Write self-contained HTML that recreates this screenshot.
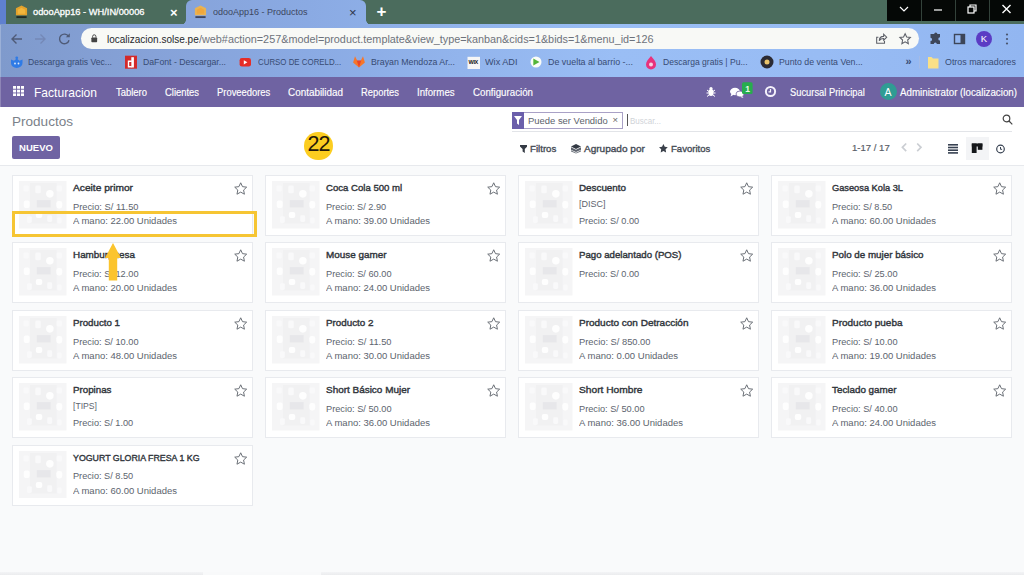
<!DOCTYPE html>
<html lang="es">
<head>
<meta charset="utf-8">
<title>odooApp16 - Productos</title>
<style>
*{box-sizing:border-box;margin:0;padding:0}
html,body{width:1024px;height:575px;overflow:hidden;background:#f9fafb;font-family:"Liberation Sans",sans-serif;}
body{position:relative}
.abs{position:absolute;white-space:nowrap;transform-origin:0 0}
/* chrome */
#tabstrip{position:absolute;left:0;top:0;width:1024px;height:25px;background:#4b6c5d}
#leftedge{position:absolute;left:0;top:0;width:6px;height:25px;background:#5f80d0}
#tab2{position:absolute;left:185.500px;top:0;width:180px;height:25px;background:linear-gradient(90deg,#7f9acc 0,#86a2d8 15%,#8aaae3 30%,#9abef5 60%,#98bcf4 80%,#92b6f1 100%);background-size:1024px 100%;background-position:-185.500px 0;border-radius:6px 6px 0 0}
#tab2:before,#tab2:after{content:"";position:absolute;bottom:0.500px;width:5px;height:5px}
#tab2:before{left:-5px;background:radial-gradient(circle at 0 0,transparent 4.500px,#87a4dc 5px)}
#tab2:after{right:-5px;background:radial-gradient(circle at 100% 0,transparent 4.500px,#8cade6 5px)}
#toolbar{position:absolute;left:0;top:24.300px;width:1024px;height:52.700px;background:linear-gradient(90deg,#7f9acc 0,#86a2d8 15%,#8aaae3 30%,#9abef5 60%,#98bcf4 80%,#92b6f1 100%)}
#url{position:absolute;left:80.700px;top:28px;width:838.500px;height:21px;border-radius:11px;background:#f8f9f6}
.tabt{font-size:9.300px;top:6.500px}
#winctl{position:absolute;left:887px;top:0;width:137px;height:21.200px;background:#050806}
#winctl i{position:absolute;top:0;width:1px;height:21.200px;background:#33423a}
.bm{font-size:9.400px;top:56.300px;color:#384b73}
/* odoo navbar */
#nav{position:absolute;left:0;top:77px;width:1024px;height:30px;background:#6f63a2}
.nv{font-size:10.200px;color:#fff;top:87.200px;-webkit-text-stroke:0.150px #fff}
/* control panel */
#cp{position:absolute;left:0;top:107px;width:1024px;height:58.500px;background:#fff;border-bottom:1px solid #e7e9ed}
#btn{position:absolute;left:12px;top:136px;width:48px;height:23px;background:#6f63a3;border-radius:2px;color:#fff;font-weight:bold;font-size:9.5px;text-align:center;line-height:23px;letter-spacing:0}
.cpt{font-size:9.700px;color:#454b55;top:142.900px;-webkit-text-stroke:0.350px #454b55}
/* cards */
.card{position:absolute;width:241px;height:61px;background:#fff;border:1px solid #e8eaee}
.card .ph{position:absolute;left:6px;top:5.300px;width:47.500px;height:47.500px}
.card .ti{transform-origin:0 0;position:absolute;left:60px;top:6px;font-size:9.900px;color:#30353b;-webkit-text-stroke:0.400px #30353b;white-space:nowrap}
.card .ln{transform-origin:0 0;position:absolute;left:60px;font-size:9.600px;color:#5d646e;white-space:nowrap;}
.card .l0{top:24.900px}
.card .l1{top:39.200px}
.card .star{position:absolute;left:220.300px;top:5px;width:15.400px;height:15.400px}
</style>
</head>
<body>
<!-- ===== browser chrome ===== -->
<div id="tabstrip"></div>
<div id="leftedge"></div>
<div id="tab2"></div>
<div id="toolbar"></div>
<div id="url"></div>
<div id="winctl"><i style="left:34px"></i><i style="left:68px"></i><i style="left:102px"></i></div>

<!-- tab 1 -->
<svg class="abs" style="left:14.500px;top:5px" width="13" height="14" viewBox="0 0 14 15"><path d="M7 0.500L13 3.500V11H1V3.500z" fill="#e3a22c"/><path d="M7 3L11 5V9.500H3V5z" fill="#f1b63c"/><rect x="1.500" y="12" width="11" height="2" fill="#1f2a25"/></svg>
<div class="abs tabt" style="left:33px;color:#fff;-webkit-text-stroke:0.300px #fff;transform:scaleX(0.9987)">odooApp16 - WH/IN/00006</div>
<div class="abs" style="left:170px;top:4.500px;color:#fff;font-size:13px;font-weight:bold">×</div>
<!-- tab 2 -->
<svg class="abs" style="left:193.500px;top:5px" width="13" height="14" viewBox="0 0 14 15"><path d="M7 0.500L13 3.500V11H1V3.500z" fill="#e9b354"/><path d="M7 3L11 5V9.500H3V5z" fill="#f0a73c"/><rect x="1.500" y="12" width="11" height="2" fill="#3c4560"/></svg>
<div class="abs tabt" style="left:213px;color:#3c4660;transform:scaleX(0.9674)">odooApp16 - Productos</div>
<div class="abs" style="left:349px;top:4.500px;color:#2d3446;font-size:13px">×</div>
<div class="abs" style="left:376.500px;top:1.500px;color:#fff;font-size:17px;font-weight:bold">+</div>
<!-- window controls -->
<svg class="abs" style="left:886.500px;top:-2.600px" width="137" height="24" viewBox="0 0 137 24" fill="none" stroke="#fff" stroke-width="1.2"><path d="M13 10l4 4 4-4"/><path d="M47 13h8"/><rect x="81" y="10" width="6" height="6"/><path d="M83 10v-2h6v6h-2"/><path d="M115.500 8l8 8M123.500 8l-8 8" stroke-width="1.400"/></svg>

<!-- toolbar icons -->
<svg class="abs" style="left:8px;top:29px" width="70" height="20" viewBox="0 0 70 20" fill="none" stroke-width="1.400"><path d="M14 10H4M8.500 5.500L4 10l4.500 4.500" stroke="#4f5b77"/><path d="M27 10h10M32.500 5.500L37 10l-4.500 4.500" stroke="#7488b6"/><path d="M60.500 7.500A4.800 4.800 0 1 0 61 11.200" stroke="#4f5b77"/><path d="M61.800 4.200v4h-4z" fill="#4f5b77" stroke="none"/></svg>
<svg class="abs" style="left:91px;top:34px" width="6.500" height="8.700" viewBox="0 0 9 12"><rect x="0.5" y="5" width="8" height="6.5" rx="1" fill="#444"/><path d="M2.2 5V3.4a2.3 2.3 0 0 1 4.6 0V5" fill="none" stroke="#444" stroke-width="1.3"/></svg>
<div class="abs" style="left:107px;top:32.500px;font-size:10.500px;color:#25272c;transform:scaleX(0.9521)">localizacion.solse.pe</div>
<div class="abs" style="left:199px;top:32.500px;font-size:10.500px;color:#6d727b;transform:scaleX(1.0312)">/web#action=257&amp;model=product.template&amp;view_type=kanban&amp;cids=1&amp;bids=1&amp;menu_id=126</div>
<svg class="abs" style="left:874.400px;top:32.200px" width="38.500" height="13.100" viewBox="0 0 44 15" fill="none" stroke="#5d6068" stroke-width="1.200"><path d="M5 6H3v7h9V10"/><path d="M6 10c0-3 2-5 5-5V2.5L14.5 6 11 9.500V7.500C9 7.500 7 8 6 10z"/><path transform="translate(3.600,0)" d="M32 2l1.800 3.800 4.200.5-3.100 2.900.8 4.200L32 11.300l-3.700 2.100.8-4.200L26 6.300l4.200-.5z"/></svg>
<svg class="abs" style="left:927px;top:30px" width="90" height="18" viewBox="0 0 90 18"><path d="M5 4h2.200a1.600 1.600 0 1 1 3.200 0H13v3.200a1.700 1.700 0 1 0 0 3.400V14H9.800a1.500 1.500 0 1 0-3 0H3.500v-3a1.600 1.600 0 1 0 0-3.200V4z" fill="#3d4659"/><rect x="27.500" y="4.500" width="10" height="9" fill="none" stroke="#3d4659" stroke-width="1.400"/><rect x="33.500" y="4.500" width="4" height="9" fill="#3d4659"/><circle cx="57" cy="9" r="8" fill="#5b3cc4"/><circle cx="80" cy="4.500" r="1.100" fill="#4a556e"/><circle cx="80" cy="9" r="1.100" fill="#4a556e"/><circle cx="80" cy="13.500" r="1.100" fill="#4a556e"/></svg>
<div class="abs" style="left:980.700px;top:33px;font-size:9.500px;color:#fff">K</div>

<!-- bookmarks -->
<svg class="abs" style="left:8px;top:53px" width="1016" height="18" viewBox="0 0 1016 18">
<path d="M3 6.500l3 1.300 2.750-2.200 2.750 2.200 3-1.300V10a5.750 5 0 0 1-11.500 0z" fill="#2f7be6"/><circle cx="8.750" cy="4.800" r="1.400" fill="#2f7be6"/><circle cx="7" cy="10.500" r="0.900" fill="#dce9fb"/><circle cx="10.500" cy="10.500" r="0.900" fill="#dce9fb"/>
<rect x="117" y="2.700" width="12" height="13" fill="#d42a2a"/><rect x="123.300" y="4.200" width="2.600" height="10.300" fill="#fff"/><rect x="119.800" y="7.500" width="4" height="7" fill="#fff"/><rect x="121.200" y="9" width="2.100" height="4" fill="#d42a2a"/>
<rect x="231.600" y="5" width="11.400" height="8.600" rx="2.300" fill="#e52d27"/><path d="M235.800 7.200l3.600 2.100-3.600 2.100z" fill="#fff"/>
<path d="M347 3.200l2.300 4.600h3.400l2.300-4.600 1.900 6.300-5.900 5-5.900-5z" fill="#f6762a"/><path d="M348.800 7.600h4.400l-2.200 6.800z" fill="#e9432a"/>
<rect x="459.500" y="3.800" width="12.500" height="12.200" fill="#f6f6f6"/>
<circle cx="528" cy="9" r="5.500" fill="#fbfdf8"/><path d="M525.300 5.600l6.200 3.400-6.200 3.400z" fill="#54b53a"/>
<path d="M643 3c3 3.500 5 5.500 5 8.500a5 5 0 0 1-10 0c0-3 2-5 5-8.500z" fill="#e8327c"/><circle cx="643" cy="11.500" r="2" fill="#f7d3e3"/>
<circle cx="759" cy="9" r="6.500" fill="#2b2b33"/><circle cx="759" cy="9" r="2.500" fill="#e9c36a"/>
<path d="M920 4h3.500l1.500 1.500H930.500V15.500H920z" fill="#f9e088"/>
<rect x="911" y="3" width="1" height="12.500" fill="#a4bbe6"/>
</svg>
<div class="abs" style="left:468.500px;top:59px;font-size:5.500px;font-weight:bold;color:#111;letter-spacing:-0.300px">WIX</div>
<div class="abs bm" style="left:28px;transform:scaleX(0.9158)">Descarga gratis Vec...</div>
<div class="abs bm" style="left:143px;transform:scaleX(0.9261)">DaFont - Descargar...</div>
<div class="abs bm" style="left:257.500px;transform:scaleX(0.841)">CURSO DE CORELD...</div>
<div class="abs bm" style="left:371px;transform:scaleX(0.9371)">Brayan Mendoza Ar...</div>
<div class="abs bm" style="left:485px;transform:scaleX(0.9747)">Wix ADI</div>
<div class="abs bm" style="left:548px;transform:scaleX(0.9484)">De vuelta al barrio -...</div>
<div class="abs bm" style="left:663px;transform:scaleX(0.9138)">Descarga gratis | Pu...</div>
<div class="abs bm" style="left:779px;transform:scaleX(0.9347)">Punto de venta Ven...</div>
<div class="abs bm" style="left:905.500px;top:54.800px;font-size:11px;font-weight:bold">»</div>
<div class="abs bm" style="left:945px;transform:scaleX(0.9463)">Otros marcadores</div>

<!-- ===== odoo navbar ===== -->
<div class="abs" style="left:0;top:24.500px;width:1.300px;height:82.500px;background:rgba(255,255,255,0.22);z-index:5"></div>
<div id="nav"></div>
<svg class="abs" style="left:13px;top:86.200px" width="11.200" height="10.200" viewBox="0 0 12 11" fill="#fff"><rect x="0" y="0" width="3.300" height="3"/><rect x="4.300" y="0" width="3.300" height="3"/><rect x="8.600" y="0" width="3.300" height="3"/><rect x="0" y="4" width="3.300" height="3"/><rect x="4.300" y="4" width="3.300" height="3"/><rect x="8.600" y="4" width="3.300" height="3"/><rect x="0" y="8" width="3.300" height="3"/><rect x="4.300" y="8" width="3.300" height="3"/><rect x="8.600" y="8" width="3.300" height="3"/></svg>
<div class="abs" style="left:34px;top:84.700px;font-size:13px;color:#fff;transform:scaleX(0.9275)">Facturacion</div>
<div class="abs nv" style="left:116px;transform:scaleX(0.9275)">Tablero</div>
<div class="abs nv" style="left:165px;transform:scaleX(0.9236)">Clientes</div>
<div class="abs nv" style="left:217px;transform:scaleX(0.9227)">Proveedores</div>
<div class="abs nv" style="left:288px;transform:scaleX(0.971)">Contabilidad</div>
<div class="abs nv" style="left:361px;transform:scaleX(0.9191)">Reportes</div>
<div class="abs nv" style="left:417px;transform:scaleX(0.9485)">Informes</div>
<div class="abs nv" style="left:473px;transform:scaleX(0.9543)">Configuración</div>
<svg class="abs" style="left:704px;top:83.400px;overflow:visible" width="76" height="17" viewBox="0 0 76 17"><ellipse cx="7" cy="9.500" rx="2.600" ry="3.500" fill="#fff"/><circle cx="7" cy="5.500" r="1.600" fill="#fff"/><path d="M3 7l2 1.500M11 7L9 8.500M2.500 10h2M11.500 10h-2M3 13.500l2-1.500M11 13.500L9 12" stroke="#fff" stroke-width="1" fill="none"/><ellipse cx="31" cy="8.500" rx="5" ry="3.700" fill="#fff"/><path d="M27.500 10.500l-1 3 3.500-2z" fill="#fff"/><ellipse cx="36" cy="11" rx="4" ry="3" fill="#fff" stroke="#71639e" stroke-width=".8"/><path d="M38 13l1.500 2-3-1z" fill="#fff"/><rect x="38" y="-0.800" width="10.600" height="11.800" rx="1.500" fill="#27ad4e"/><circle cx="66.500" cy="8.500" r="4.600" fill="none" stroke="#f4f1fb" stroke-width="2"/><path d="M66.500 6v2.800h-2" fill="none" stroke="#f4f1fb" stroke-width="1.200"/></svg>
<div class="abs" style="left:745.300px;top:83.900px;font-size:8.500px;font-weight:bold;color:#eafbe9">1</div>
<div class="abs nv" style="left:790px;transform:scaleX(0.9173)">Sucursal Principal</div>
<div class="abs" style="left:879.500px;top:83px;width:17px;height:17px;border-radius:9px;background:#2f9c93"></div>
<div class="abs" style="left:884.500px;top:85.600px;font-size:10.500px;color:#fff">A</div>
<div class="abs nv" style="left:900px;transform:scaleX(0.9567)">Administrator (localizacion)</div>

<!-- ===== control panel ===== -->
<div id="cp"></div>
<div class="abs" style="left:12px;top:113.700px;font-size:13.500px;color:#7b8189;transform:scaleX(1.0033)">Productos</div>
<div id="btn">NUEVO</div>
<div class="abs" style="left:304px;top:131.500px;width:28.500px;height:28.500px;border-radius:15px;background:#fccd20"></div>
<div class="abs" style="left:307.500px;top:132.400px;font-size:21.500px;color:#24170a;letter-spacing:-1px">22</div>
<!-- search -->
<div class="abs" style="left:512px;top:130.500px;width:500px;height:1px;background:#e2e4e8"></div>
<div class="abs" style="left:512px;top:112px;width:111px;height:16.500px;border:1px solid #a9a1c6;background:#fff"></div>
<div class="abs" style="left:512px;top:112px;width:12px;height:16.500px;background:#6b5fab"></div>
<svg class="abs" style="left:514px;top:116px" width="8" height="9" viewBox="0 0 8 9"><path d="M0 0h8L5 4v5L3 7.500V4z" fill="#fff"/></svg>
<div class="abs" style="left:528.300px;top:114.800px;font-size:9.700px;color:#5c626b;transform:scaleX(0.9735)">Puede ser Vendido</div>
<div class="abs" style="left:612.500px;top:114px;font-size:9.500px;color:#666">×</div>
<div class="abs" style="left:627px;top:114px;width:1px;height:12px;background:#555"></div>
<div class="abs" style="left:630px;top:115px;font-size:9.500px;color:#d0d3d8;transform:scaleX(0.8385)">Buscar...</div>
<svg class="abs" style="left:1002px;top:114px" width="11" height="11" viewBox="0 0 11 11" fill="none" stroke="#444" stroke-width="1.200"><circle cx="4.500" cy="4.500" r="3.300"/><path d="M7 7l3.300 3.300"/></svg>
<!-- filters -->
<svg class="abs" style="left:519.800px;top:144.800px" width="7.400" height="8" viewBox="0 0 7.400 8"><path d="M0 0h7.400v1.400L4.800 4V8L2.600 6.600V4L0 1.400z" fill="#353b45"/></svg>
<div class="abs cpt" style="left:530px;transform:scaleX(0.9972)">Filtros</div>
<svg class="abs" style="left:570.800px;top:144px" width="10" height="9.600" viewBox="0 0 11 10.500"><path d="M5.500 0L11 2.700 5.500 5.400 0 2.700z" fill="#343a44"/><path d="M0 3.600l5.500 2.700L11 3.600v2.600L5.500 8.900 0 6.200z" fill="#5d636d"/><path d="M0 6.800l5.500 2.700L11 6.800v1.400L5.500 10.500 0 8.200z" fill="#6f757e"/></svg>
<div class="abs cpt" style="left:583.700px;transform:scaleX(1.0357)">Agrupado por</div>
<svg class="abs" style="left:659px;top:144.200px" width="8.800" height="8.400" viewBox="0 0 24 23"><path d="M12 0l3.700 7.600 8.300 1.200-6 5.900 1.400 8.300L12 19l-7.400 4 1.400-8.300-6-5.900 8.300-1.200z" fill="#3a404a"/></svg>
<div class="abs cpt" style="left:671.200px;transform:scaleX(0.9867)">Favoritos</div>
<div class="abs" style="left:852px;top:142.300px;font-size:9.700px;color:#5a6068;-webkit-text-stroke:0.200px #5a6068;transform:scaleX(0.9856)">1-17 / 17</div>
<svg class="abs" style="left:898.700px;top:141.800px" width="28" height="11" viewBox="0 0 28 11" fill="none" stroke="#cbced3" stroke-width="1.700"><path d="M7.200 1.500L3.400 5.300l3.800 3.800"/><path d="M18.200 1.500l3.800 3.800-3.800 3.800"/></svg>
<div class="abs" style="left:966.400px;top:136.500px;width:23px;height:23.500px;background:#f3f4f6"></div>
<svg class="abs" style="left:947px;top:143px" width="60" height="12" viewBox="0 0 60 12"><g fill="#374151"><rect x="1" y="1" width="10" height="1.600"/><rect x="1" y="3.700" width="10" height="1.600"/><rect x="1" y="6.400" width="10" height="1.600"/><rect x="1" y="9.100" width="10" height="1.600"/><rect x="24.800" y="0.500" width="10.600" height="3" fill="#15171a"/><rect x="24.800" y="0.500" width="4.800" height="9.500" fill="#15171a"/><rect x="30.800" y="0.500" width="4.600" height="6.300" fill="#15171a"/></g><circle cx="53.500" cy="6" r="3.800" fill="none" stroke="#374151" stroke-width="1.200"/><path d="M53.500 4v2.300h1.600" fill="none" stroke="#374151" stroke-width="1"/></svg>

<!-- ===== kanban ===== -->
<div class="card" style="left:12px;top:175px"><svg class="ph" viewBox="0 0 48 48"><rect width="48" height="48" fill="#f5f5f6"/><rect x="11" y="2" width="27" height="41" fill="#f1f1f2"/><rect x="18" y="19.300" width="14" height="7.400" fill="#e7e7ea"/><g fill="#f9f9fa"><rect x="4.500" y="4.500" width="5.500" height="6" rx="1.500"/><rect x="16.500" y="4.500" width="5.500" height="8" rx="1.500"/><rect x="38" y="4.500" width="5.500" height="6" rx="1.500"/><rect x="8" y="35.500" width="5" height="7" rx="1.500"/><rect x="28.500" y="34.500" width="5" height="7" rx="1.500"/><rect x="38.500" y="37" width="4.500" height="6" rx="1.500"/></g><g fill="#fefefe"><circle cx="31.200" cy="13" r="3.800"/><rect x="4.800" y="19.600" width="6" height="7.600" rx="2"/><rect x="37.700" y="20.200" width="6" height="7.600" rx="2.500"/><rect x="17" y="31.400" width="6.500" height="6" rx="2"/></g></svg><div class="ti" style="transform:scaleX(1.0314)">Aceite primor</div><div class="ln l0" style="transform:scaleX(0.9695)">Precio: S/ 11.50</div><div class="ln l1" style="transform:scaleX(0.9897)">A mano: 22.00 Unidades</div><svg class="star" viewBox="0 0 24 24"><path d="M12 2.8l2.8 6 6.5.8-4.8 4.5 1.3 6.5L12 17.3 6.2 20.6l1.3-6.5L2.7 9.6l6.5-.8z" fill="none" stroke="#666b73" stroke-width="1.5" stroke-linejoin="round"/></svg></div>
<div class="card" style="left:265px;top:175px"><svg class="ph" viewBox="0 0 48 48"><rect width="48" height="48" fill="#f5f5f6"/><rect x="11" y="2" width="27" height="41" fill="#f1f1f2"/><rect x="18" y="19.300" width="14" height="7.400" fill="#e7e7ea"/><g fill="#f9f9fa"><rect x="4.500" y="4.500" width="5.500" height="6" rx="1.500"/><rect x="16.500" y="4.500" width="5.500" height="8" rx="1.500"/><rect x="38" y="4.500" width="5.500" height="6" rx="1.500"/><rect x="8" y="35.500" width="5" height="7" rx="1.500"/><rect x="28.500" y="34.500" width="5" height="7" rx="1.500"/><rect x="38.500" y="37" width="4.500" height="6" rx="1.500"/></g><g fill="#fefefe"><circle cx="31.200" cy="13" r="3.800"/><rect x="4.800" y="19.600" width="6" height="7.600" rx="2"/><rect x="37.700" y="20.200" width="6" height="7.600" rx="2.500"/><rect x="17" y="31.400" width="6.500" height="6" rx="2"/></g></svg><div class="ti" style="transform:scaleX(0.9707)">Coca Cola 500 ml</div><div class="ln l0" style="transform:scaleX(0.9565)">Precio: S/ 2.90</div><div class="ln l1" style="transform:scaleX(0.9897)">A mano: 39.00 Unidades</div><svg class="star" viewBox="0 0 24 24"><path d="M12 2.8l2.8 6 6.5.8-4.8 4.5 1.3 6.5L12 17.3 6.2 20.6l1.3-6.5L2.7 9.6l6.5-.8z" fill="none" stroke="#666b73" stroke-width="1.5" stroke-linejoin="round"/></svg></div>
<div class="card" style="left:518px;top:175px"><svg class="ph" viewBox="0 0 48 48"><rect width="48" height="48" fill="#f5f5f6"/><rect x="11" y="2" width="27" height="41" fill="#f1f1f2"/><rect x="18" y="19.300" width="14" height="7.400" fill="#e7e7ea"/><g fill="#f9f9fa"><rect x="4.500" y="4.500" width="5.500" height="6" rx="1.500"/><rect x="16.500" y="4.500" width="5.500" height="8" rx="1.500"/><rect x="38" y="4.500" width="5.500" height="6" rx="1.500"/><rect x="8" y="35.500" width="5" height="7" rx="1.500"/><rect x="28.500" y="34.500" width="5" height="7" rx="1.500"/><rect x="38.500" y="37" width="4.500" height="6" rx="1.500"/></g><g fill="#fefefe"><circle cx="31.200" cy="13" r="3.800"/><rect x="4.800" y="19.600" width="6" height="7.600" rx="2"/><rect x="37.700" y="20.200" width="6" height="7.600" rx="2.500"/><rect x="17" y="31.400" width="6.500" height="6" rx="2"/></g></svg><div class="ti" style="transform:scaleX(0.9954)">Descuento</div><div class="ln l0" style="top:21.900px;transform:scaleX(0.9375)">[DISC]</div><div class="ln l1" style="transform:scaleX(0.9565)">Precio: S/ 0.00</div><svg class="star" viewBox="0 0 24 24"><path d="M12 2.8l2.8 6 6.5.8-4.8 4.5 1.3 6.5L12 17.3 6.2 20.6l1.3-6.5L2.7 9.6l6.5-.8z" fill="none" stroke="#666b73" stroke-width="1.5" stroke-linejoin="round"/></svg></div>
<div class="card" style="left:771px;top:175px"><svg class="ph" viewBox="0 0 48 48"><rect width="48" height="48" fill="#f5f5f6"/><rect x="11" y="2" width="27" height="41" fill="#f1f1f2"/><rect x="18" y="19.300" width="14" height="7.400" fill="#e7e7ea"/><g fill="#f9f9fa"><rect x="4.500" y="4.500" width="5.500" height="6" rx="1.500"/><rect x="16.500" y="4.500" width="5.500" height="8" rx="1.500"/><rect x="38" y="4.500" width="5.500" height="6" rx="1.500"/><rect x="8" y="35.500" width="5" height="7" rx="1.500"/><rect x="28.500" y="34.500" width="5" height="7" rx="1.500"/><rect x="38.500" y="37" width="4.500" height="6" rx="1.500"/></g><g fill="#fefefe"><circle cx="31.200" cy="13" r="3.800"/><rect x="4.800" y="19.600" width="6" height="7.600" rx="2"/><rect x="37.700" y="20.200" width="6" height="7.600" rx="2.500"/><rect x="17" y="31.400" width="6.500" height="6" rx="2"/></g></svg><div class="ti" style="transform:scaleX(0.9371)">Gaseosa Kola 3L</div><div class="ln l0" style="transform:scaleX(0.9565)">Precio: S/ 8.50</div><div class="ln l1" style="transform:scaleX(0.9897)">A mano: 60.00 Unidades</div><svg class="star" viewBox="0 0 24 24"><path d="M12 2.8l2.8 6 6.5.8-4.8 4.5 1.3 6.5L12 17.3 6.2 20.6l1.3-6.5L2.7 9.6l6.5-.8z" fill="none" stroke="#666b73" stroke-width="1.5" stroke-linejoin="round"/></svg></div>
<div class="card" style="left:12px;top:242px"><svg class="ph" viewBox="0 0 48 48"><rect width="48" height="48" fill="#f5f5f6"/><rect x="11" y="2" width="27" height="41" fill="#f1f1f2"/><rect x="18" y="19.300" width="14" height="7.400" fill="#e7e7ea"/><g fill="#f9f9fa"><rect x="4.500" y="4.500" width="5.500" height="6" rx="1.500"/><rect x="16.500" y="4.500" width="5.500" height="8" rx="1.500"/><rect x="38" y="4.500" width="5.500" height="6" rx="1.500"/><rect x="8" y="35.500" width="5" height="7" rx="1.500"/><rect x="28.500" y="34.500" width="5" height="7" rx="1.500"/><rect x="38.500" y="37" width="4.500" height="6" rx="1.500"/></g><g fill="#fefefe"><circle cx="31.200" cy="13" r="3.800"/><rect x="4.800" y="19.600" width="6" height="7.600" rx="2"/><rect x="37.700" y="20.200" width="6" height="7.600" rx="2.500"/><rect x="17" y="31.400" width="6.500" height="6" rx="2"/></g></svg><div class="ti" style="transform:scaleX(0.9995)">Hamburguesa</div><div class="ln l0" style="transform:scaleX(0.9595)">Precio: S/ 12.00</div><div class="ln l1" style="transform:scaleX(0.9897)">A mano: 20.00 Unidades</div><svg class="star" viewBox="0 0 24 24"><path d="M12 2.8l2.8 6 6.5.8-4.8 4.5 1.3 6.5L12 17.3 6.2 20.6l1.3-6.5L2.7 9.6l6.5-.8z" fill="none" stroke="#666b73" stroke-width="1.5" stroke-linejoin="round"/></svg></div>
<div class="card" style="left:265px;top:242px"><svg class="ph" viewBox="0 0 48 48"><rect width="48" height="48" fill="#f5f5f6"/><rect x="11" y="2" width="27" height="41" fill="#f1f1f2"/><rect x="18" y="19.300" width="14" height="7.400" fill="#e7e7ea"/><g fill="#f9f9fa"><rect x="4.500" y="4.500" width="5.500" height="6" rx="1.500"/><rect x="16.500" y="4.500" width="5.500" height="8" rx="1.500"/><rect x="38" y="4.500" width="5.500" height="6" rx="1.500"/><rect x="8" y="35.500" width="5" height="7" rx="1.500"/><rect x="28.500" y="34.500" width="5" height="7" rx="1.500"/><rect x="38.500" y="37" width="4.500" height="6" rx="1.500"/></g><g fill="#fefefe"><circle cx="31.200" cy="13" r="3.800"/><rect x="4.800" y="19.600" width="6" height="7.600" rx="2"/><rect x="37.700" y="20.200" width="6" height="7.600" rx="2.500"/><rect x="17" y="31.400" width="6.500" height="6" rx="2"/></g></svg><div class="ti" style="transform:scaleX(1.0021)">Mouse gamer</div><div class="ln l0" style="transform:scaleX(0.9595)">Precio: S/ 60.00</div><div class="ln l1" style="transform:scaleX(0.9897)">A mano: 24.00 Unidades</div><svg class="star" viewBox="0 0 24 24"><path d="M12 2.8l2.8 6 6.5.8-4.8 4.5 1.3 6.5L12 17.3 6.2 20.6l1.3-6.5L2.7 9.6l6.5-.8z" fill="none" stroke="#666b73" stroke-width="1.5" stroke-linejoin="round"/></svg></div>
<div class="card" style="left:518px;top:242px"><svg class="ph" viewBox="0 0 48 48"><rect width="48" height="48" fill="#f5f5f6"/><rect x="11" y="2" width="27" height="41" fill="#f1f1f2"/><rect x="18" y="19.300" width="14" height="7.400" fill="#e7e7ea"/><g fill="#f9f9fa"><rect x="4.500" y="4.500" width="5.500" height="6" rx="1.500"/><rect x="16.500" y="4.500" width="5.500" height="8" rx="1.500"/><rect x="38" y="4.500" width="5.500" height="6" rx="1.500"/><rect x="8" y="35.500" width="5" height="7" rx="1.500"/><rect x="28.500" y="34.500" width="5" height="7" rx="1.500"/><rect x="38.500" y="37" width="4.500" height="6" rx="1.500"/></g><g fill="#fefefe"><circle cx="31.200" cy="13" r="3.800"/><rect x="4.800" y="19.600" width="6" height="7.600" rx="2"/><rect x="37.700" y="20.200" width="6" height="7.600" rx="2.500"/><rect x="17" y="31.400" width="6.500" height="6" rx="2"/></g></svg><div class="ti" style="transform:scaleX(0.9775)">Pago adelantado (POS)</div><div class="ln l0" style="transform:scaleX(0.9565)">Precio: S/ 0.00</div><svg class="star" viewBox="0 0 24 24"><path d="M12 2.8l2.8 6 6.5.8-4.8 4.5 1.3 6.5L12 17.3 6.2 20.6l1.3-6.5L2.7 9.6l6.5-.8z" fill="none" stroke="#666b73" stroke-width="1.5" stroke-linejoin="round"/></svg></div>
<div class="card" style="left:771px;top:242px"><svg class="ph" viewBox="0 0 48 48"><rect width="48" height="48" fill="#f5f5f6"/><rect x="11" y="2" width="27" height="41" fill="#f1f1f2"/><rect x="18" y="19.300" width="14" height="7.400" fill="#e7e7ea"/><g fill="#f9f9fa"><rect x="4.500" y="4.500" width="5.500" height="6" rx="1.500"/><rect x="16.500" y="4.500" width="5.500" height="8" rx="1.500"/><rect x="38" y="4.500" width="5.500" height="6" rx="1.500"/><rect x="8" y="35.500" width="5" height="7" rx="1.500"/><rect x="28.500" y="34.500" width="5" height="7" rx="1.500"/><rect x="38.500" y="37" width="4.500" height="6" rx="1.500"/></g><g fill="#fefefe"><circle cx="31.200" cy="13" r="3.800"/><rect x="4.800" y="19.600" width="6" height="7.600" rx="2"/><rect x="37.700" y="20.200" width="6" height="7.600" rx="2.500"/><rect x="17" y="31.400" width="6.500" height="6" rx="2"/></g></svg><div class="ti" style="transform:scaleX(0.9922)">Polo de mujer básico</div><div class="ln l0" style="transform:scaleX(0.9595)">Precio: S/ 25.00</div><div class="ln l1" style="transform:scaleX(0.9897)">A mano: 36.00 Unidades</div><svg class="star" viewBox="0 0 24 24"><path d="M12 2.8l2.8 6 6.5.8-4.8 4.5 1.3 6.5L12 17.3 6.2 20.6l1.3-6.5L2.7 9.6l6.5-.8z" fill="none" stroke="#666b73" stroke-width="1.5" stroke-linejoin="round"/></svg></div>
<div class="card" style="left:12px;top:310px"><svg class="ph" viewBox="0 0 48 48"><rect width="48" height="48" fill="#f5f5f6"/><rect x="11" y="2" width="27" height="41" fill="#f1f1f2"/><rect x="18" y="19.300" width="14" height="7.400" fill="#e7e7ea"/><g fill="#f9f9fa"><rect x="4.500" y="4.500" width="5.500" height="6" rx="1.500"/><rect x="16.500" y="4.500" width="5.500" height="8" rx="1.500"/><rect x="38" y="4.500" width="5.500" height="6" rx="1.500"/><rect x="8" y="35.500" width="5" height="7" rx="1.500"/><rect x="28.500" y="34.500" width="5" height="7" rx="1.500"/><rect x="38.500" y="37" width="4.500" height="6" rx="1.500"/></g><g fill="#fefefe"><circle cx="31.200" cy="13" r="3.800"/><rect x="4.800" y="19.600" width="6" height="7.600" rx="2"/><rect x="37.700" y="20.200" width="6" height="7.600" rx="2.500"/><rect x="17" y="31.400" width="6.500" height="6" rx="2"/></g></svg><div class="ti" style="transform:scaleX(0.984)">Producto 1</div><div class="ln l0" style="transform:scaleX(0.9595)">Precio: S/ 10.00</div><div class="ln l1" style="transform:scaleX(0.9897)">A mano: 48.00 Unidades</div><svg class="star" viewBox="0 0 24 24"><path d="M12 2.8l2.8 6 6.5.8-4.8 4.5 1.3 6.5L12 17.3 6.2 20.6l1.3-6.5L2.7 9.6l6.5-.8z" fill="none" stroke="#666b73" stroke-width="1.5" stroke-linejoin="round"/></svg></div>
<div class="card" style="left:265px;top:310px"><svg class="ph" viewBox="0 0 48 48"><rect width="48" height="48" fill="#f5f5f6"/><rect x="11" y="2" width="27" height="41" fill="#f1f1f2"/><rect x="18" y="19.300" width="14" height="7.400" fill="#e7e7ea"/><g fill="#f9f9fa"><rect x="4.500" y="4.500" width="5.500" height="6" rx="1.500"/><rect x="16.500" y="4.500" width="5.500" height="8" rx="1.500"/><rect x="38" y="4.500" width="5.500" height="6" rx="1.500"/><rect x="8" y="35.500" width="5" height="7" rx="1.500"/><rect x="28.500" y="34.500" width="5" height="7" rx="1.500"/><rect x="38.500" y="37" width="4.500" height="6" rx="1.500"/></g><g fill="#fefefe"><circle cx="31.200" cy="13" r="3.800"/><rect x="4.800" y="19.600" width="6" height="7.600" rx="2"/><rect x="37.700" y="20.200" width="6" height="7.600" rx="2.500"/><rect x="17" y="31.400" width="6.500" height="6" rx="2"/></g></svg><div class="ti" style="transform:scaleX(0.9944)">Producto 2</div><div class="ln l0" style="transform:scaleX(0.9695)">Precio: S/ 11.50</div><div class="ln l1" style="transform:scaleX(0.9897)">A mano: 30.00 Unidades</div><svg class="star" viewBox="0 0 24 24"><path d="M12 2.8l2.8 6 6.5.8-4.8 4.5 1.3 6.5L12 17.3 6.2 20.6l1.3-6.5L2.7 9.6l6.5-.8z" fill="none" stroke="#666b73" stroke-width="1.5" stroke-linejoin="round"/></svg></div>
<div class="card" style="left:518px;top:310px"><svg class="ph" viewBox="0 0 48 48"><rect width="48" height="48" fill="#f5f5f6"/><rect x="11" y="2" width="27" height="41" fill="#f1f1f2"/><rect x="18" y="19.300" width="14" height="7.400" fill="#e7e7ea"/><g fill="#f9f9fa"><rect x="4.500" y="4.500" width="5.500" height="6" rx="1.500"/><rect x="16.500" y="4.500" width="5.500" height="8" rx="1.500"/><rect x="38" y="4.500" width="5.500" height="6" rx="1.500"/><rect x="8" y="35.500" width="5" height="7" rx="1.500"/><rect x="28.500" y="34.500" width="5" height="7" rx="1.500"/><rect x="38.500" y="37" width="4.500" height="6" rx="1.500"/></g><g fill="#fefefe"><circle cx="31.200" cy="13" r="3.800"/><rect x="4.800" y="19.600" width="6" height="7.600" rx="2"/><rect x="37.700" y="20.200" width="6" height="7.600" rx="2.500"/><rect x="17" y="31.400" width="6.500" height="6" rx="2"/></g></svg><div class="ti" style="transform:scaleX(1.0126)">Producto con Detracción</div><div class="ln l0" style="transform:scaleX(0.9713)">Precio: S/ 850.00</div><div class="ln l1" style="transform:scaleX(0.9925)">A mano: 0.00 Unidades</div><svg class="star" viewBox="0 0 24 24"><path d="M12 2.8l2.8 6 6.5.8-4.8 4.5 1.3 6.5L12 17.3 6.2 20.6l1.3-6.5L2.7 9.6l6.5-.8z" fill="none" stroke="#666b73" stroke-width="1.5" stroke-linejoin="round"/></svg></div>
<div class="card" style="left:771px;top:310px"><svg class="ph" viewBox="0 0 48 48"><rect width="48" height="48" fill="#f5f5f6"/><rect x="11" y="2" width="27" height="41" fill="#f1f1f2"/><rect x="18" y="19.300" width="14" height="7.400" fill="#e7e7ea"/><g fill="#f9f9fa"><rect x="4.500" y="4.500" width="5.500" height="6" rx="1.500"/><rect x="16.500" y="4.500" width="5.500" height="8" rx="1.500"/><rect x="38" y="4.500" width="5.500" height="6" rx="1.500"/><rect x="8" y="35.500" width="5" height="7" rx="1.500"/><rect x="28.500" y="34.500" width="5" height="7" rx="1.500"/><rect x="38.500" y="37" width="4.500" height="6" rx="1.500"/></g><g fill="#fefefe"><circle cx="31.200" cy="13" r="3.800"/><rect x="4.800" y="19.600" width="6" height="7.600" rx="2"/><rect x="37.700" y="20.200" width="6" height="7.600" rx="2.500"/><rect x="17" y="31.400" width="6.500" height="6" rx="2"/></g></svg><div class="ti" style="transform:scaleX(1.011)">Producto pueba</div><div class="ln l0" style="transform:scaleX(0.9595)">Precio: S/ 10.00</div><div class="ln l1" style="transform:scaleX(0.9897)">A mano: 19.00 Unidades</div><svg class="star" viewBox="0 0 24 24"><path d="M12 2.8l2.8 6 6.5.8-4.8 4.5 1.3 6.5L12 17.3 6.2 20.6l1.3-6.5L2.7 9.6l6.5-.8z" fill="none" stroke="#666b73" stroke-width="1.5" stroke-linejoin="round"/></svg></div>
<div class="card" style="left:12px;top:377px"><svg class="ph" viewBox="0 0 48 48"><rect width="48" height="48" fill="#f5f5f6"/><rect x="11" y="2" width="27" height="41" fill="#f1f1f2"/><rect x="18" y="19.300" width="14" height="7.400" fill="#e7e7ea"/><g fill="#f9f9fa"><rect x="4.500" y="4.500" width="5.500" height="6" rx="1.500"/><rect x="16.500" y="4.500" width="5.500" height="8" rx="1.500"/><rect x="38" y="4.500" width="5.500" height="6" rx="1.500"/><rect x="8" y="35.500" width="5" height="7" rx="1.500"/><rect x="28.500" y="34.500" width="5" height="7" rx="1.500"/><rect x="38.500" y="37" width="4.500" height="6" rx="1.500"/></g><g fill="#fefefe"><circle cx="31.200" cy="13" r="3.800"/><rect x="4.800" y="19.600" width="6" height="7.600" rx="2"/><rect x="37.700" y="20.200" width="6" height="7.600" rx="2.500"/><rect x="17" y="31.400" width="6.500" height="6" rx="2"/></g></svg><div class="ti" style="transform:scaleX(0.9876)">Propinas</div><div class="ln l0" style="top:21.900px;transform:scaleX(0.9004)">[TIPS]</div><div class="ln l1" style="transform:scaleX(0.9565)">Precio: S/ 1.00</div><svg class="star" viewBox="0 0 24 24"><path d="M12 2.8l2.8 6 6.5.8-4.8 4.5 1.3 6.5L12 17.3 6.2 20.6l1.3-6.5L2.7 9.6l6.5-.8z" fill="none" stroke="#666b73" stroke-width="1.5" stroke-linejoin="round"/></svg></div>
<div class="card" style="left:265px;top:377px"><svg class="ph" viewBox="0 0 48 48"><rect width="48" height="48" fill="#f5f5f6"/><rect x="11" y="2" width="27" height="41" fill="#f1f1f2"/><rect x="18" y="19.300" width="14" height="7.400" fill="#e7e7ea"/><g fill="#f9f9fa"><rect x="4.500" y="4.500" width="5.500" height="6" rx="1.500"/><rect x="16.500" y="4.500" width="5.500" height="8" rx="1.500"/><rect x="38" y="4.500" width="5.500" height="6" rx="1.500"/><rect x="8" y="35.500" width="5" height="7" rx="1.500"/><rect x="28.500" y="34.500" width="5" height="7" rx="1.500"/><rect x="38.500" y="37" width="4.500" height="6" rx="1.500"/></g><g fill="#fefefe"><circle cx="31.200" cy="13" r="3.800"/><rect x="4.800" y="19.600" width="6" height="7.600" rx="2"/><rect x="37.700" y="20.200" width="6" height="7.600" rx="2.500"/><rect x="17" y="31.400" width="6.500" height="6" rx="2"/></g></svg><div class="ti" style="transform:scaleX(1.0069)">Short Básico Mujer</div><div class="ln l0" style="transform:scaleX(0.9595)">Precio: S/ 50.00</div><div class="ln l1" style="transform:scaleX(0.9897)">A mano: 36.00 Unidades</div><svg class="star" viewBox="0 0 24 24"><path d="M12 2.8l2.8 6 6.5.8-4.8 4.5 1.3 6.5L12 17.3 6.2 20.6l1.3-6.5L2.7 9.6l6.5-.8z" fill="none" stroke="#666b73" stroke-width="1.5" stroke-linejoin="round"/></svg></div>
<div class="card" style="left:518px;top:377px"><svg class="ph" viewBox="0 0 48 48"><rect width="48" height="48" fill="#f5f5f6"/><rect x="11" y="2" width="27" height="41" fill="#f1f1f2"/><rect x="18" y="19.300" width="14" height="7.400" fill="#e7e7ea"/><g fill="#f9f9fa"><rect x="4.500" y="4.500" width="5.500" height="6" rx="1.500"/><rect x="16.500" y="4.500" width="5.500" height="8" rx="1.500"/><rect x="38" y="4.500" width="5.500" height="6" rx="1.500"/><rect x="8" y="35.500" width="5" height="7" rx="1.500"/><rect x="28.500" y="34.500" width="5" height="7" rx="1.500"/><rect x="38.500" y="37" width="4.500" height="6" rx="1.500"/></g><g fill="#fefefe"><circle cx="31.200" cy="13" r="3.800"/><rect x="4.800" y="19.600" width="6" height="7.600" rx="2"/><rect x="37.700" y="20.200" width="6" height="7.600" rx="2.500"/><rect x="17" y="31.400" width="6.500" height="6" rx="2"/></g></svg><div class="ti" style="transform:scaleX(1.033)">Short Hombre</div><div class="ln l0" style="transform:scaleX(0.9595)">Precio: S/ 50.00</div><div class="ln l1" style="transform:scaleX(0.9897)">A mano: 36.00 Unidades</div><svg class="star" viewBox="0 0 24 24"><path d="M12 2.8l2.8 6 6.5.8-4.8 4.5 1.3 6.5L12 17.3 6.2 20.6l1.3-6.5L2.7 9.6l6.5-.8z" fill="none" stroke="#666b73" stroke-width="1.5" stroke-linejoin="round"/></svg></div>
<div class="card" style="left:771px;top:377px"><svg class="ph" viewBox="0 0 48 48"><rect width="48" height="48" fill="#f5f5f6"/><rect x="11" y="2" width="27" height="41" fill="#f1f1f2"/><rect x="18" y="19.300" width="14" height="7.400" fill="#e7e7ea"/><g fill="#f9f9fa"><rect x="4.500" y="4.500" width="5.500" height="6" rx="1.500"/><rect x="16.500" y="4.500" width="5.500" height="8" rx="1.500"/><rect x="38" y="4.500" width="5.500" height="6" rx="1.500"/><rect x="8" y="35.500" width="5" height="7" rx="1.500"/><rect x="28.500" y="34.500" width="5" height="7" rx="1.500"/><rect x="38.500" y="37" width="4.500" height="6" rx="1.500"/></g><g fill="#fefefe"><circle cx="31.200" cy="13" r="3.800"/><rect x="4.800" y="19.600" width="6" height="7.600" rx="2"/><rect x="37.700" y="20.200" width="6" height="7.600" rx="2.500"/><rect x="17" y="31.400" width="6.500" height="6" rx="2"/></g></svg><div class="ti" style="transform:scaleX(0.9957)">Teclado gamer</div><div class="ln l0" style="transform:scaleX(0.9595)">Precio: S/ 40.00</div><div class="ln l1" style="transform:scaleX(0.9897)">A mano: 24.00 Unidades</div><svg class="star" viewBox="0 0 24 24"><path d="M12 2.8l2.8 6 6.5.8-4.8 4.5 1.3 6.5L12 17.3 6.2 20.6l1.3-6.5L2.7 9.6l6.5-.8z" fill="none" stroke="#666b73" stroke-width="1.5" stroke-linejoin="round"/></svg></div>
<div class="card" style="left:12px;top:444.5px"><svg class="ph" viewBox="0 0 48 48"><rect width="48" height="48" fill="#f5f5f6"/><rect x="11" y="2" width="27" height="41" fill="#f1f1f2"/><rect x="18" y="19.300" width="14" height="7.400" fill="#e7e7ea"/><g fill="#f9f9fa"><rect x="4.500" y="4.500" width="5.500" height="6" rx="1.500"/><rect x="16.500" y="4.500" width="5.500" height="8" rx="1.500"/><rect x="38" y="4.500" width="5.500" height="6" rx="1.500"/><rect x="8" y="35.500" width="5" height="7" rx="1.500"/><rect x="28.500" y="34.500" width="5" height="7" rx="1.500"/><rect x="38.500" y="37" width="4.500" height="6" rx="1.500"/></g><g fill="#fefefe"><circle cx="31.200" cy="13" r="3.800"/><rect x="4.800" y="19.600" width="6" height="7.600" rx="2"/><rect x="37.700" y="20.200" width="6" height="7.600" rx="2.500"/><rect x="17" y="31.400" width="6.500" height="6" rx="2"/></g></svg><div class="ti" style="transform:scaleX(0.8922)">YOGURT GLORIA FRESA 1 KG</div><div class="ln l0" style="transform:scaleX(0.9565)">Precio: S/ 8.50</div><div class="ln l1" style="transform:scaleX(0.9897)">A mano: 60.00 Unidades</div><svg class="star" viewBox="0 0 24 24"><path d="M12 2.8l2.8 6 6.5.8-4.8 4.5 1.3 6.5L12 17.3 6.2 20.6l1.3-6.5L2.7 9.6l6.5-.8z" fill="none" stroke="#666b73" stroke-width="1.5" stroke-linejoin="round"/></svg></div>

<!-- annotation -->
<div class="abs" style="left:11.700px;top:211.300px;width:245.600px;height:26px;border:3.400px solid #f6c533"></div>
<svg class="abs" style="left:102px;top:242px" width="22" height="40" viewBox="0 0 22 40"><path d="M11 1L19 16H15.200V38.500H6.800V16H3z" fill="#fbc42d"/></svg>
<div class="abs" style="left:0;top:571.500px;width:1024px;height:3.500px;background:linear-gradient(#f3f4f6,#ebecee)"></div>
<div class="abs" style="left:203px;top:571.500px;width:118px;height:3.500px;background:#f8f9fa"></div>
</body>
</html>
